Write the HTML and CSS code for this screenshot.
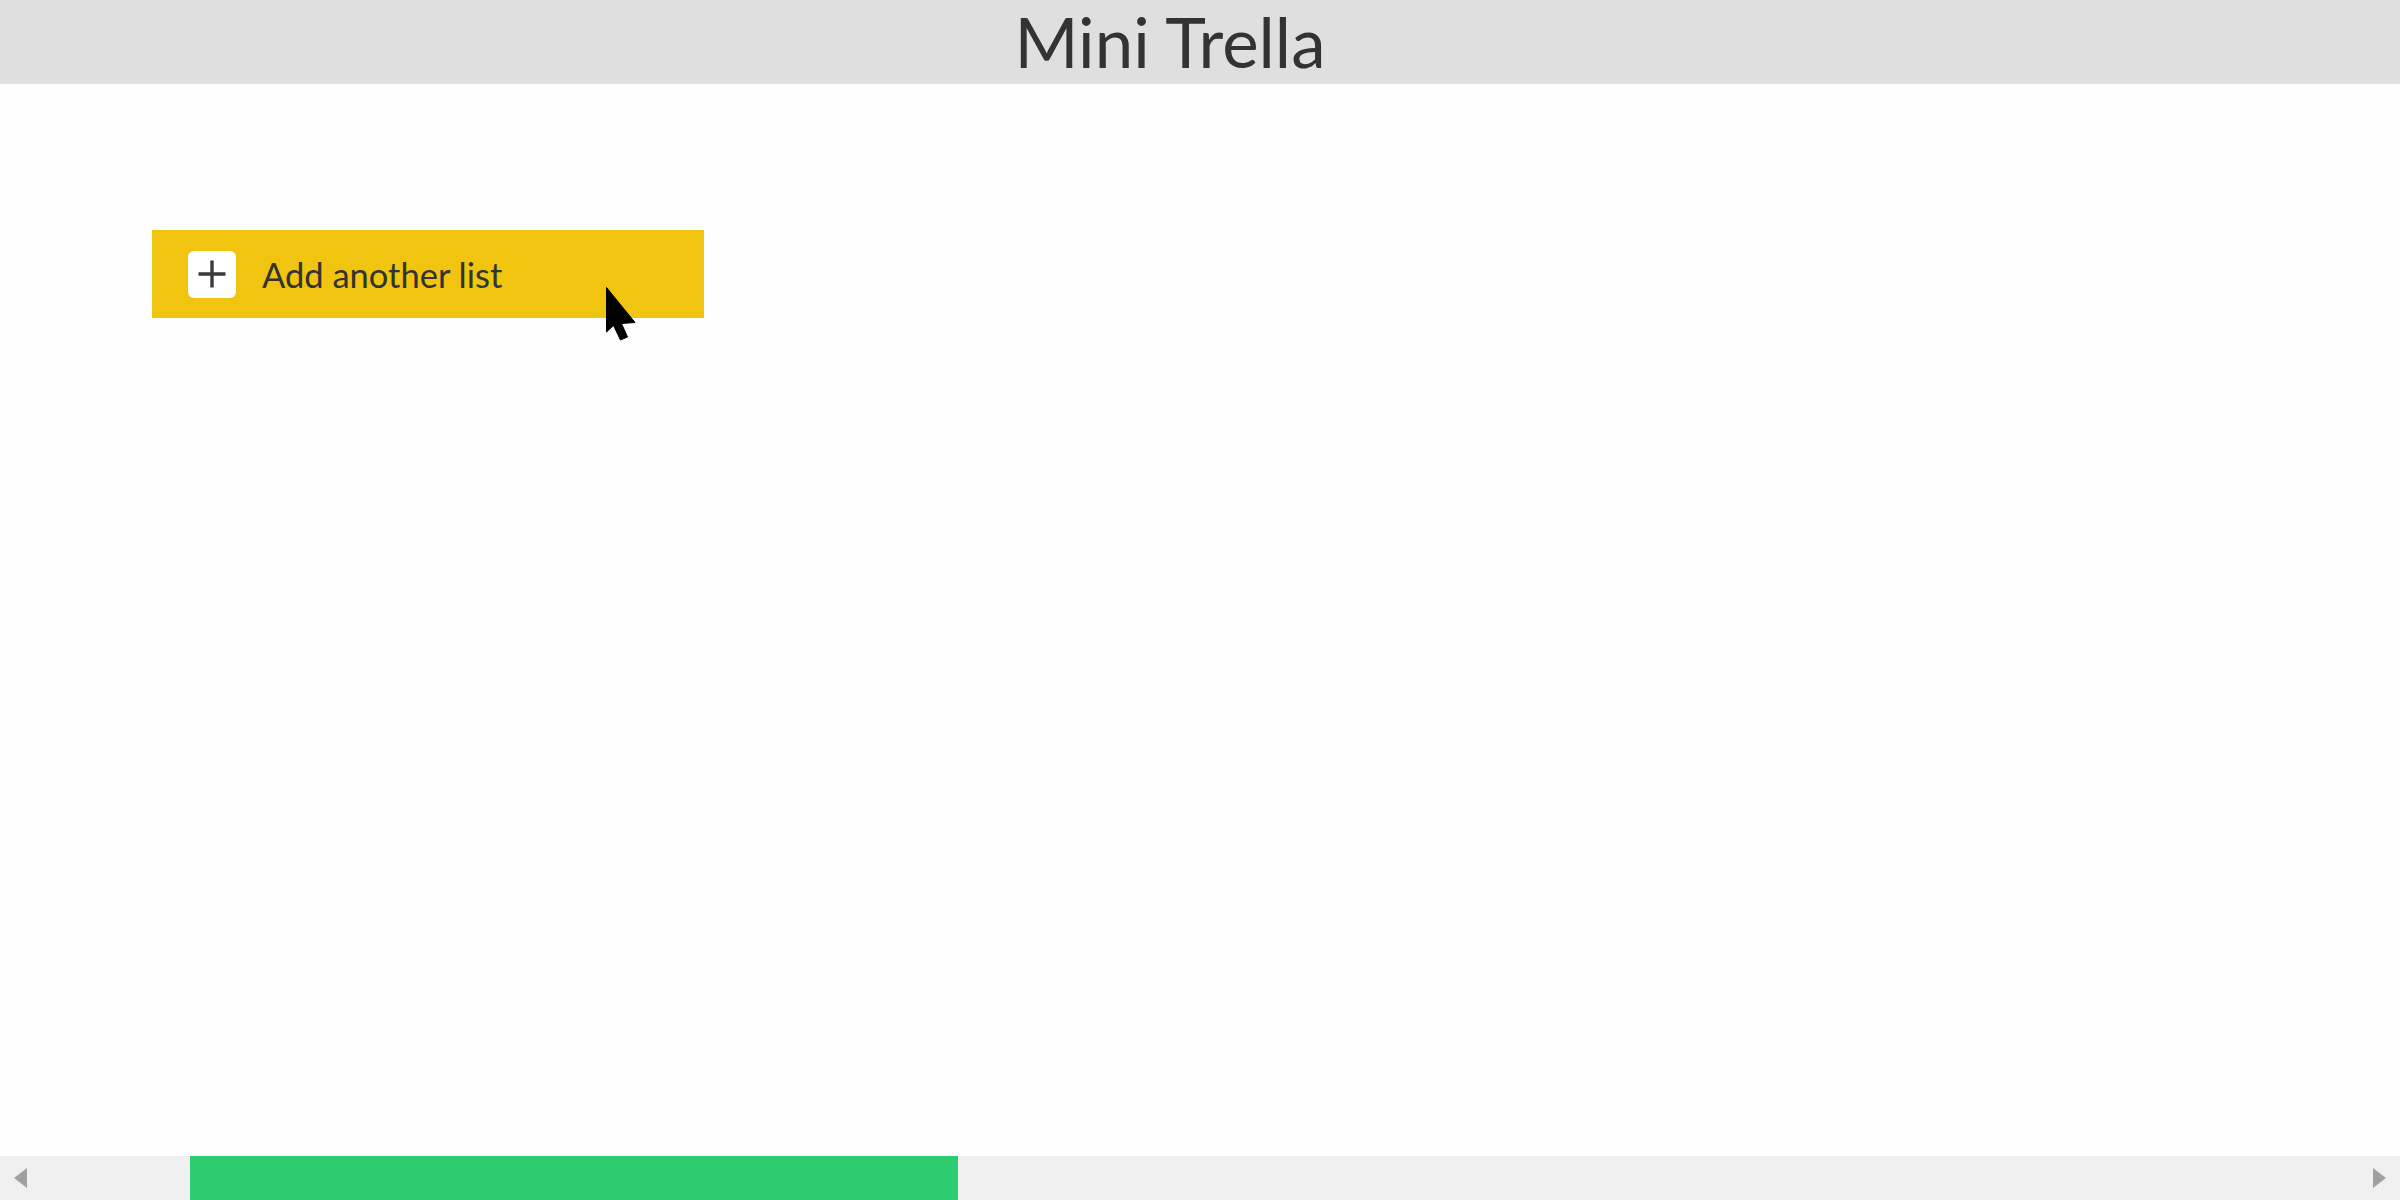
FILE: index.html
```
<!DOCTYPE html>
<html lang="en">
<head>
<meta charset="utf-8">
<title>Mini Trella</title>
<link rel="stylesheet" href="styles.css">
</head>
<body>
<header class="topbar">
  <h1 class="title">Mini Trella</h1>
</header>
<main class="board">
  <div class="lists">
    <button class="add-list" type="button">
      <span class="add-icon">
        <svg width="30" height="30" viewBox="0 0 30 30"><path d="M15 1.5 V28.5 M1.5 15 H28.5" stroke="#3a3a3a" stroke-width="3.4" fill="none"/></svg>
      </span>
      <span class="add-label">Add another list</span>
    </button>
  </div>
  <svg class="cursor" width="30" height="54" viewBox="0 0 30 54"><path d="M0.5 0.5 L0.5 45 L7.5 38.5 L14.5 53 L21.5 50 L15.5 36.5 L29 35.5 Z" fill="#000" stroke="#000" stroke-width="1" stroke-linejoin="round"/></svg>
</main>
<div class="hscroll">
  <div class="arrow-btn"><span class="tri tri-left"></span></div>
  <div class="track">
    <div class="thumb" style="margin-left:149px;width:768px"></div>
  </div>
  <div class="arrow-btn arrow-right"><span class="tri tri-right"></span></div>
</div>
</body>
</html>
```
FILE: styles.css
```
* { box-sizing: border-box; }
html, body { margin: 0; padding: 0; }
body {
  height: 100vh;
  display: flex;
  flex-direction: column;
  background: #fefefe;
  font-family: Lato, "Open Sans", sans-serif;
  color: #333;
  overflow: hidden;
}
.topbar {
  height: 84px;
  flex: 0 0 84px;
  background: #dfdfdf;
  display: flex;
  align-items: center;
  justify-content: center;
  padding-right: 60px;
}
.title {
  margin: 0;
  font-weight: 400;
  font-size: 69px;
  line-height: 84px;
  color: #333;
}
.board {
  flex: 1;
  position: relative;
  padding: 146px 0 0 152px;
}
.lists {
  display: flex;
  gap: 20px;
}
.add-list {
  width: 552px;
  height: 88px;
  background: #f1c40f;
  border: 0;
  padding: 0 0 0 36px;
  display: flex;
  align-items: center;
  gap: 26px;
  font-family: inherit;
  cursor: pointer;
}
.add-icon {
  width: 48px;
  height: 47px;
  background: #fff;
  border-radius: 6px;
  display: flex;
  align-items: center;
  justify-content: center;
}
.add-label {
  font-size: 34.5px;
  color: #333;
  font-weight: 400;
}
.cursor {
  position: absolute;
  left: 606px;
  top: 203px;
}
.hscroll {
  height: 44px;
  flex: 0 0 44px;
  background: #f0f0f0;
  display: flex;
}
.arrow-btn {
  width: 41px;
  display: flex;
  align-items: center;
  justify-content: center;
}
.arrow-right { width: 42px; }
.track {
  flex: 1;
  display: flex;
}
.thumb {
  height: 100%;
  background: #2ecc71;
}
.tri {
  width: 0;
  height: 0;
  border-top: 10px solid transparent;
  border-bottom: 10px solid transparent;
}
.tri-left { border-right: 13px solid #a0a0a0; }
.tri-right { border-left: 13px solid #a0a0a0; }
```
